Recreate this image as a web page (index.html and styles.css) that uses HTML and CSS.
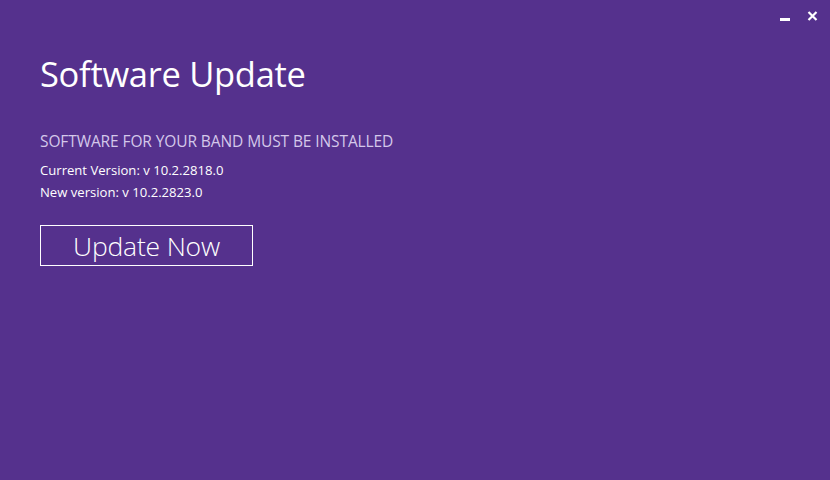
FILE: index.html
```html
<!DOCTYPE html>
<html>
<head>
  <meta charset="utf-8">
  <title>Software Update</title>
  <link rel="stylesheet" href="styles.css">
</head>
<body>
  <div class="window">
    <div class="titlebar">
      <span class="ctl min"></span>
      <span class="ctl close">
        <svg width="11" height="10" viewBox="0 0 11 10"><path d="M1.5 1L9.5 9M9.5 1L1.5 9" stroke="#fff" stroke-width="2.2"/></svg>
      </span>
    </div>
    <div class="content">
      <h1 class="title">Software Update</h1>
      <p class="notice">SOFTWARE FOR YOUR BAND MUST BE INSTALLED</p>
      <p class="version">Current Version: v 10.2.2818.0</p>
      <p class="version">New version: v 10.2.2823.0</p>
      <button class="button" type="button">Update Now</button>
    </div>
  </div>
</body>
</html>
```

FILE: styles.css
```css
html, body {
  margin: 0;
  padding: 0;
}

body {
  background: #55318d;
  font-family: "Open Sans", "Noto Sans", sans-serif;
  color: #fff;
}

.window {
  width: 830px;
  height: 480px;
  box-sizing: border-box;
}

.titlebar {
  display: flex;
  justify-content: flex-end;
  align-items: flex-end;
  gap: 17px;
  padding: 11px 12px 0 0;
  height: 10px;
}

.ctl {
  display: flex;
  width: 10px;
  height: 10px;
  align-items: flex-end;
}

.close {
  width: 11px;
}

.min::after {
  content: "";
  display: block;
  width: 10px;
  height: 3px;
  background: #fff;
}

.content {
  padding: 31px 40px 0 40px;
}

.title {
  margin: 0;
  font-size: 34.5px;
  font-weight: 400;
  line-height: 44px;
  letter-spacing: -0.3px;
}

.notice {
  margin: 35px 0 0 0;
  font-size: 15.5px;
  line-height: 20px;
  letter-spacing: -0.1px;
  color: #d4c8ea;
}

.version {
  margin: 0;
  font-size: 13.1px;
  line-height: 22px;
}

.notice + .version {
  margin-top: 8px;
}

.button {
  margin-top: 22px;
  width: 213px;
  height: 41px;
  background: transparent;
  border: 1px solid #fff;
  color: #fff;
  font-family: "Open Sans", "Noto Sans", sans-serif;
  font-size: 26.5px;
  font-weight: 300;
  letter-spacing: -0.2px;
  padding: 0;
}
```
